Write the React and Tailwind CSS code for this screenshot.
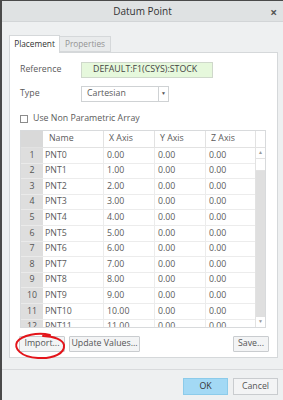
const rows = Array.from({ length: 12 }, (_, i) => ({
  n: i + 1,
  name: `PNT${i}`,
  x: `${i}.00`,
}));

const Btn = ({ children, className = "" }) => (
  <div
    className={`h-[16px] flex items-center justify-center border border-[#c9cccf] bg-[#f3f4f5] text-[#555] rounded-[1px] ${className}`}
  >
    {children}
  </div>
);

export default function App() {
  return (
    <div
      className="relative w-[283px] h-[400px] overflow-hidden bg-[#eef0f1] border-t border-l-2 border-[#4a4a4a] flex flex-col text-[8.8px] text-[#5b5b5b]"
      style={{ fontFamily: '"Open Sans", "Noto Sans", sans-serif' }}
    >
      {/* title bar */}
      <div className="h-[21px] shrink-0 bg-[#dfe2e3] border-b border-[#d2d5d7] flex items-center relative">
        <div className="flex-1 text-center text-[#333] text-[10px]">Datum Point</div>
        <div className="absolute right-[6px] top-[3px] text-[12px] font-bold text-[#555]">×</div>
      </div>

      <div className="pl-[7px] pr-[5px] pt-[12px]">
        {/* tabs */}
        <div className="flex h-[18px] items-end text-[8.3px]">
          <div className="h-[18px] w-[51px] bg-white border border-b-0 border-[#d5d8da] flex items-center justify-center text-[#333] relative z-10 translate-y-[1px]">
            Placement
          </div>
          <div className="h-[16px] w-[51px] bg-[#e9ebec] border border-l-0 border-[#d5d8da] flex items-center justify-center text-[#939393]">
            Properties
          </div>
        </div>

        {/* panel */}
        <div className="h-[306px] bg-white border border-[#d5d8da] pl-[10px] pr-[10px] pt-[9px] flex flex-col">
          <div className="flex items-center h-[16px]">
            <div className="w-[61px]">Reference</div>
            <div className="w-[132px] h-[16px] bg-[#e6f8dc] border border-[#cfd8cb] pl-[11px] flex items-center text-[#444]">
              DEFAULT:F1(CSYS):STOCK
            </div>
          </div>
          <div className="flex items-center h-[16px] mt-[8px]">
            <div className="w-[61px]">Type</div>
            <div className="w-[88px] h-[16px] bg-white border border-[#cfd2d4] flex items-center">
              <div className="flex-1 pl-[5px]">Cartesian</div>
              <div className="w-[10px] h-full border-l border-[#cfd2d4] flex items-center justify-center text-[5px] text-[#555]">
                ▼
              </div>
            </div>
          </div>
          <div className="flex items-center h-[12px] mt-[11px]">
            <div className="w-[8px] h-[8px] border border-[#8c8c8c] bg-white mr-[5px]" />
            <div>Use Non Parametric Array</div>
          </div>

          {/* table */}
          <div className="mt-[5px] h-[198px] w-[246px] border border-[#d8dadc] overflow-hidden flex">
            <div className="flex-1 flex flex-col">
              <div className="flex h-[17px] shrink-0 border-b border-[#e2e2e2]">
                <div className="w-[22px] bg-[#d9d9d9]" />
                <div className="w-[61px] border-r border-[#e2e2e2] flex items-center pl-[6px]">Name</div>
                <div className="w-[51px] border-r border-[#e2e2e2] flex items-center pl-[5px]">X Axis</div>
                <div className="w-[51px] border-r border-[#e2e2e2] flex items-center pl-[5px]">Y Axis</div>
                <div className="flex-1 flex items-center pl-[5px]">Z Axis</div>
              </div>
              {rows.map((r) => (
                <div key={r.n} className="flex h-[15.6px] shrink-0">
                  <div className="w-[22px] bg-[#dedede] border-b border-[#eaeaea] flex items-center justify-center text-[#555]">
                    {r.n}
                  </div>
                  <div className="w-[61px] border-r border-b border-[#ececec] flex items-center pl-[2px]">{r.name}</div>
                  <div className="w-[51px] border-r border-b border-[#ececec] flex items-center pl-[3px]">{r.x}</div>
                  <div className="w-[51px] border-r border-b border-[#ececec] flex items-center pl-[3px]">0.00</div>
                  <div className="flex-1 border-b border-[#ececec] flex items-center pl-[3px]">0.00</div>
                </div>
              ))}
            </div>
            {/* scrollbar */}
            <div className="w-[10px] border-l border-[#e2e2e2] flex flex-col">
              <div className="h-[17px] border-b border-[#e2e2e2] bg-white" />
              <div className="h-[10px] flex items-center justify-center text-[5px] text-[#999] bg-white">▲</div>
              <div className="h-[13px] bg-white border-y border-[#e2e2e2]" />
              <div className="flex-1 bg-[#dfdfdf]" />
              <div className="h-[10px] flex items-center justify-center text-[5px] text-[#999] bg-white">▼</div>
            </div>
          </div>

          <div className="flex mt-[8px] -ml-[1px]">
            <Btn className="w-[46px]">Import...</Btn>
            <Btn className="w-[71px] ml-[4px]">Update Values...</Btn>
            <Btn className="w-[36px] ml-auto mr-[-2px]">Save...</Btn>
          </div>
        </div>
      </div>

      {/* footer */}
      <div className="mt-[11px] border-t border-[#d8dadc] flex justify-end pt-[8px] pr-[5px] gap-[5px]">
        <div className="w-[45px] h-[17px] bg-[#a3d9f5] border border-[#8ccbea] flex items-center justify-center text-[#333]">
          OK
        </div>
        <div className="w-[45px] h-[17px] bg-[#f3f4f5] border border-[#c9cccf] flex items-center justify-center text-[#555]">
          Cancel
        </div>
      </div>

      {/* red annotation */}
      <svg className="absolute left-0 top-0 pointer-events-none" width="283" height="400">
        <path
          d="M48 334 C36 331 20 334 15 341 C12 347 18 356 36 357 C52 358 63 352 62 344 C61 339 52 335 41 335"
          fill="none"
          stroke="#e3141a"
          strokeWidth="2"
          strokeLinecap="round"
        />
      </svg>
    </div>
  );
}
